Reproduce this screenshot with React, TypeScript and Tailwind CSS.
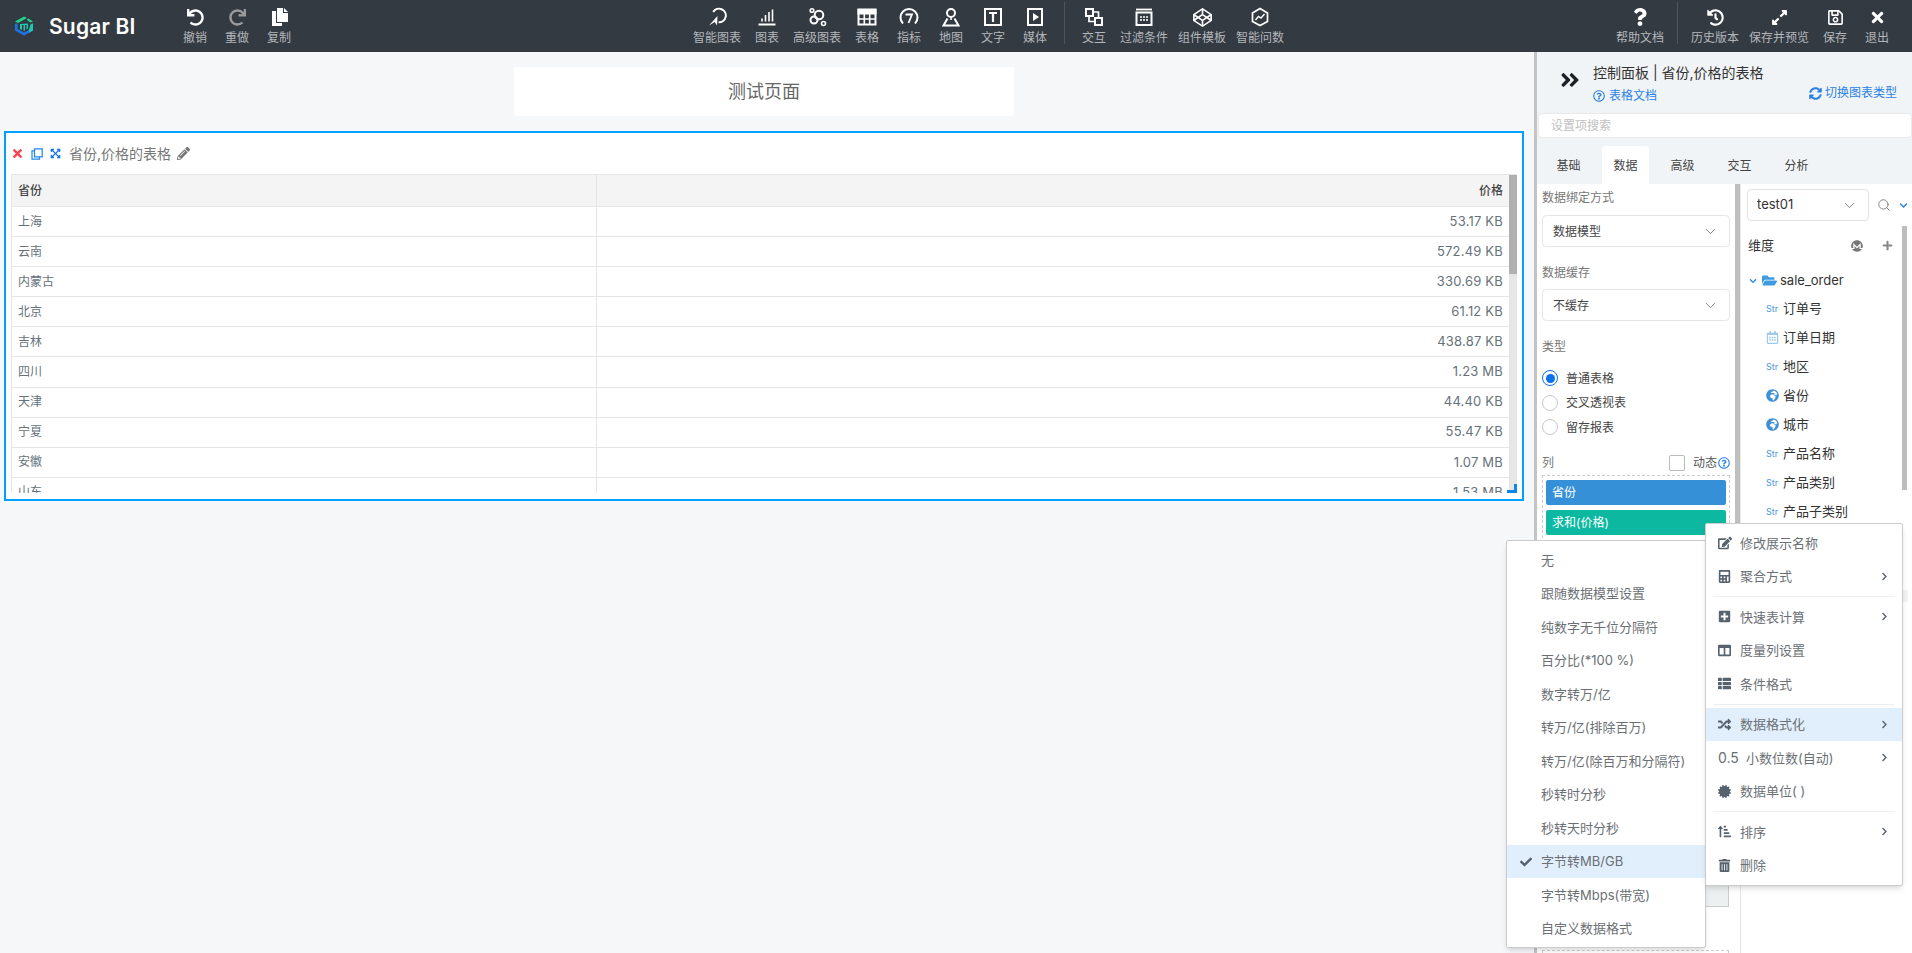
import React from "react";
import {
  FaUndo, FaRedo, FaQuestion, FaHistory, FaExpandAlt, FaRegSave, FaTimes, FaAngleDoubleRight,
  FaSyncAlt, FaPencilAlt, FaEdit, FaCalculator, FaPlusSquare, FaColumns, FaThList, FaRandom,
  FaCertificate, FaSortAmountUpAlt, FaTrashAlt, FaChevronRight, FaCheck, FaCodepen, FaMonero,
  FaPlus, FaFolderOpen, FaChevronDown, FaGlobeAfrica, FaRegQuestionCircle, FaQuestionCircle, FaRegCalendarAlt,
  FaExpandArrowsAlt,
} from "react-icons/fa";
import { ChevronDown, Search } from "lucide-react";

const S = ({ children }: { children: React.ReactNode }) => (
  <svg width="20" height="20" viewBox="0 0 20 20" fill="none" stroke="white" strokeWidth="2">{children}</svg>
);

const icons: Record<string, React.ReactNode> = {
  smart: <S><path d="M6.200 5A6.800 6.800 0 1 1 11.500 15.300" /><path d="M2 18.500 10.500 9l-.5 9.500-2.300-3.500z" fill="white" stroke="none" /></S>,
  bar: <S><path d="M1.500 17.500h17" /><path d="M5 14.500v-3M8.500 14.500V8M12 14.500V5M15.500 14.500V2.500" strokeWidth="1.6" /></S>,
  adv: <S><circle cx="12" cy="8" r="4.300" /><circle cx="7" cy="13" r="3.500" /><circle cx="5" cy="3.500" r="1.800" strokeWidth="1.600" /><circle cx="16.500" cy="16.500" r="2" strokeWidth="1.600" /></S>,
  table: <S><path d="M1.500 2.500h17v15h-17z" /><path d="M1.500 3h17v3.500h-17z" fill="white" /><path d="M1.500 12h17M7.300 6.500v11M12.700 6.500v11" strokeWidth="1.600" /></S>,
  gauge: <S><path d="M4 16.500A8.500 8.500 0 1 1 16 16.500" /><path d="M6.500 7.500h6.500L9.500 16" strokeWidth="1.800" /></S>,
  map: <S><circle cx="10" cy="6" r="4" /><path d="M10 10v3" strokeWidth="1.600" /><path d="M6.500 11.500 2.500 18.500h15L13.500 11.500" /></S>,
  text: <S><path d="M2 2h16v16H2z" /><path d="M6 6h8M10 6v9" strokeWidth="2.200" /></S>,
  media: <S><path d="M3 2h14v16H3z" /><path d="M8 6l6 4-6 4z" fill="white" stroke="none" /></S>,
  link: <S><path d="M2 2h7v7H2zM11 11h7v7h-7z" /><path d="M9 5h5.500v6M5 9v5.500h6" strokeWidth="1.700" /></S>,
  filter: <S><path d="M2 2.500h16" strokeWidth="1.800" /><path d="M2.500 5.500h15v12.500h-15z" /><path d="M6 10h2M9 10h2M12 10h2M6 13h2M9 13h2M12 13h2" strokeWidth="1.500" /></S>,
  ask: <S><path d="M10 1.500 17.500 6v8.500L10 18.500 2.500 14.500V6z" strokeWidth="1.700" /><path d="M5.500 13l3-3.500 2.500 1.500 3.500-4" strokeWidth="1.400" /></S>,
};

function Tool({ label, w, icon, dim }: { label: string; w: string; icon: React.ReactNode; dim?: boolean }) {
  return (
    <div className={`${w} flex flex-col items-center shrink-0`}>
      <div className={`h-[20px] mt-[7px] flex items-center justify-center ${dim ? "text-[#9b9b9b]" : "text-white"}`}>{icon}</div>
      <div className="text-[12px] leading-[14px] mt-[4px] text-[#b3b7bb] whitespace-nowrap">{label}</div>
    </div>
  );
}

const rows: [string, string][] = [
  ["上海", "53.17 KB"], ["云南", "572.49 KB"], ["内蒙古", "330.69 KB"], ["北京", "61.12 KB"], ["吉林", "438.87 KB"],
  ["四川", "1.23 MB"], ["天津", "44.40 KB"], ["宁夏", "55.47 KB"], ["安徽", "1.07 MB"], ["山东", "1.53 MB"],
];

const Sel = ({ text, cls }: { text: string; cls: string }) => (
  <div className={`h-[32px] w-[188px] border border-[#e6e6e6] rounded-[4px] flex items-center justify-between pl-[10px] pr-[10px] text-[12px] text-[#444] ${cls}`}>
    <span className="pt-[1px]">{text}</span><ChevronDown size={17} strokeWidth={1.1} className="text-[#666]" />
  </div>
);

const Radio = ({ label, on }: { label: string; on?: boolean }) => (
  <div className="h-[24.500px] flex items-center text-[12px] text-[#444]">
    <span className={`w-[16px] h-[16px] rounded-full border flex items-center justify-center mr-[8px] ${on ? "border-[#0b72ea]" : "border-[#c8c8c8]"}`}>
      {on && <span className="w-[9px] h-[9px] rounded-full bg-[#0b72ea]" />}
    </span>
    <span className="pt-[1px]">{label}</span>
  </div>
);

const Str = () => <span className="w-[17px] shrink-0 text-[9px] leading-none text-[#4a97dd]">Str</span>;
const Globe = () => <span className="w-[17px] shrink-0"><FaGlobeAfrica size={13} className="text-[#3f90d8]" /></span>;
const Cal = () => <span className="w-[17px] shrink-0"><FaRegCalendarAlt size={13} className="text-[#9cc9ef]" /></span>;

const tree: [string, React.ReactNode][] = [
  ["订单号", <Str />], ["订单日期", <Cal />], ["地区", <Str />], ["省份", <Globe />], ["城市", <Globe />],
  ["产品名称", <Str />], ["产品类别", <Str />], ["产品子类别", <Str />],
];

const leftMenu = ["无", "跟随数据模型设置", "纯数字无千位分隔符", "百分比(*100 %)", "数字转万/亿", "转万/亿(排除百万)", "转万/亿(除百万和分隔符)", "秒转时分秒", "秒转天时分秒", "字节转MB/GB", "字节转Mbps(带宽)", "自定义数据格式"];

const MI = ({ icon, label, arrow, active, wide }: { icon: React.ReactNode; label: string; arrow?: boolean; active?: boolean; wide?: boolean }) => (
  <div className={`h-[33.500px] flex items-center pl-[12px] pr-[13px] text-[13px] text-[#6b7075] ${active ? "bg-[#e1effd]" : ""}`}>
    <span className={`${wide ? "w-[28px]" : "w-[22px]"} shrink-0 text-[#56626e]`}>{icon}</span>
    <span className="flex-1 whitespace-nowrap pt-[1px]">{label}</span>
    {arrow && <FaChevronRight size={9} className="text-[#56626e]" />}
  </div>
);
const Div = () => <div className="h-px mx-[7px] my-[3px] bg-[#eeeeee]" />;

export default function App() {
  return (
    <div className="relative w-[1912px] h-[953px] overflow-hidden bg-[#f6f7f9] flex flex-col [font-family:Inter,'Noto_Sans_CJK_SC',sans-serif]">
      {/* header */}
      <header className="h-[52px] shrink-0 bg-[#343a42] flex">
        <div className="w-[688px] shrink-0 flex">
          <div className="w-[174px] shrink-0 flex items-center pl-[15px]">
            <svg width="18" height="20" viewBox="0 0 18 19" className="mr-[16px]">
              <path d="M0 5 9 0l3 1.500-9 5z" fill="#1fd38d" />
              <path d="M13.500 2 18 5l-2.500 1-4-2.700z" fill="#1fd38d" />
              <path d="M0 7v7l9 5 9-5V7l-2.500 1v4.500L9 16l-6.500-3.500V7z" fill="#1e74e6" />
              <path d="M15.500 8 18 7v7l-4 2.200v-3z" fill="#1fc8b0" />
              <path d="M5 7.500 13 7v5l-1.500 1V8.500H10v5.500l-1.500.3V8.500H7v5l-2-1z" fill="#1fc8b0" />
            </svg>
            <span className="text-[21px] font-semibold text-white leading-none tracking-[0.2px]">Sugar BI</span>
          </div>
          <Tool label="撤销" w="w-[42px]" icon={<FaUndo size={17} />} />
          <Tool label="重做" w="w-[42px]" dim icon={<FaRedo size={17} />} />
          <Tool label="复制" w="w-[42px]" icon={
            <svg width="17" height="18" viewBox="0 0 17 18" fill="white"><path d="M6 0h6v5h5v9H6z" /><path d="M13 0l4 4h-4z" /><path d="M1 3h4v12h6v3H1z" /></svg>
          } />
        </div>
        <Tool label="智能图表" w="w-[58px]" icon={icons.smart} />
        <Tool label="图表" w="w-[42px]" icon={icons.bar} />
        <Tool label="高级图表" w="w-[58px]" icon={icons.adv} />
        <Tool label="表格" w="w-[42px]" icon={icons.table} />
        <Tool label="指标" w="w-[42px]" icon={icons.gauge} />
        <Tool label="地图" w="w-[42px]" icon={icons.map} />
        <Tool label="文字" w="w-[42px]" icon={icons.text} />
        <Tool label="媒体" w="w-[42px]" icon={icons.media} />
        <div className="w-px h-[42px] mt-[2px] mx-[8px] bg-[#4d545c]" />
        <Tool label="交互" w="w-[42px]" icon={icons.link} />
        <Tool label="过滤条件" w="w-[58px]" icon={icons.filter} />
        <Tool label="组件模板" w="w-[58px]" icon={<FaCodepen size={19} />} />
        <Tool label="智能问数" w="w-[58px]" icon={icons.ask} />
        <div className="ml-auto flex pr-[14px]">
          <Tool label="帮助文档" w="w-[58px]" icon={<FaQuestion size={18} />} />
          <div className="w-px h-[42px] mt-[2px] mx-[8px] bg-[#4d545c]" />
          <Tool label="历史版本" w="w-[58px]" icon={<FaHistory size={17} />} />
          <Tool label="保存并预览" w="w-[70px]" icon={<FaExpandAlt size={17} />} />
          <Tool label="保存" w="w-[42px]" icon={<FaRegSave size={17} />} />
          <Tool label="退出" w="w-[42px]" icon={<FaTimes size={17} />} />
        </div>
      </header>

      <div className="flex-1 flex min-h-0">
        {/* canvas */}
        <main className="w-[1534px] shrink-0 pl-[4px] pr-[10px]">
          <div className="mt-[15px] mx-auto w-[500px] h-[49px] bg-white rounded-[2px] flex items-center justify-center text-[18px] text-[#666]">测试页面</div>
          <section className="relative mt-[15px] h-[370px] bg-white border-2 border-[#00a1ff] pl-[5px] pr-[5px]">
            <div className="h-[41px] flex items-center">
              <FaTimes size={13} className="text-[#f9454e] mr-[7px]" />
              <svg width="12" height="12" viewBox="0 0 12 12" fill="none" stroke="#1f86ee" strokeWidth="1.200" className="mr-[7px]"><path d="M3.500.8h7.700v8h-7.700zM3.500 2.800H1v8.400h7.500V9" /></svg>
              <FaExpandArrowsAlt size={11} className="text-[#0f74e6] mr-[8px]" />
              <span className="text-[14px] text-[#777]">省份,价格的表格</span>
              <FaPencilAlt size={13} className="text-[#777] ml-[6px]" />
            </div>
            <div className="h-[319px] flex overflow-hidden">
              <div className="w-[1498px] border-l border-t border-[#e6e6e6] text-[12px]">
                <div className="h-[32px] flex bg-[#f4f4f4] border-b border-[#e6e6e6] text-[#444] font-medium">
                  <div className="w-[585px] border-r border-[#e6e6e6] pl-[6px] flex items-center">省份</div>
                  <div className="flex-1 flex items-center justify-end pr-[6px]">价格</div>
                </div>
                {rows.map(([a, b]) => (
                  <div key={a} className="h-[30.100px] flex border-b border-[#e6e6e6] text-[#66727a]">
                    <div className="w-[585px] border-r border-[#e6e6e6] pl-[6px] flex items-center">{a}</div>
                    <div className="flex-1 flex items-center justify-end pr-[6px] text-[13px] tracking-[0.2px]">{b}</div>
                  </div>
                ))}
              </div>
              <div className="w-[8px] bg-[#e6e6e6]"><div className="h-[99px] mt-[1px] bg-[#b0b0b0]" /></div>
            </div>
            <div className="absolute right-[5px] bottom-[6px] w-[10px] h-[9px] border-r-[3px] border-b-[3px] border-[#0f86ee]" />
          </section>
        </main>

        {/* panel */}
        <aside className="w-[378px] shrink-0 border-l-[3px] border-[#c4c4c4] bg-[#f1f4f6] flex flex-col">
          <div className="h-[61px] flex shrink-0">
            <FaAngleDoubleRight size={22} className="text-[#1d2127] ml-[22px] mt-[17px] mr-[12px]" />
            <div className="pt-[12px]">
              <div className="text-[14px] leading-[18px] text-[#333]">控制面板 | 省份,价格的表格</div>
              <div className="flex items-center text-[12px] leading-[16px] mt-[6px] text-[#2a82e4]">
                <FaRegQuestionCircle size={12} className="mr-[4px]" />表格文档
              </div>
            </div>
            <div className="ml-auto mr-[15px] mt-[33px] h-[16px] flex items-center text-[12px] text-[#2a82e4]">
              <FaSyncAlt size={13} className="mr-[3px]" />切换图表类型
            </div>
          </div>
          <div className="h-[25px] ml-[1px] shrink-0 bg-white border border-[#e9e9e9] rounded-[4px] flex items-center pl-[12px] pt-[1px] text-[12px] text-[#c0c0c0]">设置项搜索</div>
          <div className="h-[46px] shrink-0 pt-[8px] pl-[8px] flex gap-[10px] text-[12px] text-[#444]">
            {["基础", "数据", "高级", "交互", "分析"].map((t) => (
              <div key={t} className={`w-[47px] h-[38px] pt-[1px] flex items-center justify-center rounded-t-[4px] ${t === "数据" ? "bg-white" : ""}`}>{t}</div>
            ))}
          </div>
          <div className="flex-1 min-h-0 bg-white flex overflow-hidden">
            {/* left column */}
            <div className="w-[198px] shrink-0 pl-[5px]">
              <div className="h-[26px] pt-[1px] flex items-center text-[12px] text-[#777]">数据绑定方式</div>
              <Sel text="数据模型" cls="mt-[5px]" />
              <div className="h-[20px] pt-[1px] mt-[15px] flex items-center text-[12px] text-[#777]">数据缓存</div>
              <Sel text="不缓存" cls="mt-[7px]" />
              <div className="h-[20px] pt-[1px] mt-[15px] flex items-center text-[12px] text-[#777]">类型</div>
              <div className="mt-[10px]">
                <Radio label="普通表格" on />
                <Radio label="交叉透视表" />
                <Radio label="留存报表" />
              </div>
              <div className="h-[20px] mt-[13px] w-[188px] flex items-center text-[12px] text-[#777]">
                <span>列</span>
                <span className="ml-auto w-[16px] h-[16px] rounded-[2px] border border-[#bbb] mr-[8px]" />
                <span className="text-[#555]">动态</span>
                <FaRegQuestionCircle size={12} className="ml-[1px] text-[#2a82e4]" />
              </div>
              <div className="mt-[2px] h-[404px] w-[188px] border border-dashed border-[#ccc] border-b-0 px-[3px] pt-[4px]">
                <div className="h-[25px] rounded-[2px] bg-[#3690d8] text-white text-[12px] flex items-center pl-[6px] pt-[1px]">省份</div>
                <div className="h-[25px] mt-[5px] rounded-[2px] bg-[#0cb9a0] text-white text-[12px] flex items-center pl-[6px] pt-[1px]">求和(价格)</div>
              </div>
              <div className="h-[28px] w-[187px] bg-[#edf0f1] border-r border-b border-[#cccccc]" />
              <div className="mt-[43px] h-[20px] w-[187px] border border-dashed border-[#ccc] border-b-0" />
            </div>
            <div className="w-[5px] h-[420px] shrink-0 bg-[#bfbfbf]" />
            {/* right column */}
            <div className="flex-1 border-l border-[#e6e6e6] text-[13px] text-[#333]">
              <div className="mt-[5px] flex items-center">
                <div className="ml-[6px] w-[122px] h-[32px] border border-[#e3e3e3] rounded-[4px] flex items-center justify-between pl-[9px] pr-[10px]">
                  test01<ChevronDown size={17} strokeWidth={1.1} className="text-[#666]" />
                </div>
                <Search size={14} strokeWidth={1.500} className="text-[#777] ml-[8px]" />
                <FaChevronDown size={9} className="text-[#2a82e4] ml-[8px]" />
              </div>
              <div className="mt-[5px] flex">
                <div className="w-[161px] shrink-0">
                  <div className="mt-[7px] h-[24px] pt-[1px] flex items-center pl-[7px] pr-[9px]">
                    <span className="flex-1">维度</span>
                    <FaMonero size={12} className="text-[#777]" />
                    <FaPlus size={11} className="text-[#888] ml-[19px]" />
                  </div>
                  <div className="mt-[10px] h-[27px] flex items-center pl-[8px]">
                    <FaChevronDown size={8} className="text-[#2a82e4] mr-[5px]" />
                    <FaFolderOpen size={15} className="text-[#3f9be0] mr-[3px]" />
                    sale_order
                  </div>
                  {tree.map(([t, ic]) => (
                    <div key={t} className="h-[29px] flex items-center pl-[25px] whitespace-nowrap">{ic}{t}</div>
                  ))}
                </div>
                <div className="w-[5px] h-[264px] bg-[#bdbdbd]" />
              </div>
            </div>
          </div>
        </aside>
      </div>

      {/* menus */}
      <div className="absolute left-[1903px] top-[590px] w-[5px] h-[12px] bg-[#f3f3f3]" />
      <div className="absolute left-[1506px] top-[540px] w-[200px] h-[408px] bg-white border border-[#cccccc] rounded-[2px] shadow-md py-[2px] z-10">
        {leftMenu.map((t) => (
          <div key={t} className={`h-[33.500px] flex items-center text-[13px] text-[#6b7075] pl-[34px] pt-[1px] relative ${t === "字节转MB/GB" ? "bg-[#e1effd]" : ""}`}>
            {t === "字节转MB/GB" && <FaCheck size={12} className="absolute left-[13px] text-[#56626e]" />}
            {t}
          </div>
        ))}
      </div>
      <div className="absolute left-[1705px] top-[523px] w-[198px] h-[363px] bg-white border border-[#cccccc] rounded-[2px] shadow-md py-[2px] z-20">
        <MI icon={<FaEdit size={14} />} label="修改展示名称" />
        <MI icon={<FaCalculator size={13} />} label="聚合方式" arrow />
        <Div />
        <MI icon={<FaPlusSquare size={13} />} label="快速表计算" arrow />
        <MI icon={<FaColumns size={13} />} label="度量列设置" />
        <MI icon={<FaThList size={13} />} label="条件格式" />
        <Div />
        <MI icon={<FaRandom size={13} />} label="数据格式化" arrow active />
        <MI wide icon={<span className="text-[14px] text-[#6b7075]">0.5</span>} label="小数位数(自动)" arrow />
        <MI icon={<FaCertificate size={13} />} label="数据单位( )" />
        <Div />
        <MI icon={<FaSortAmountUpAlt size={13} />} label="排序" arrow />
        <MI icon={<FaTrashAlt size={13} />} label="删除" />
      </div>
    </div>
  );
}
